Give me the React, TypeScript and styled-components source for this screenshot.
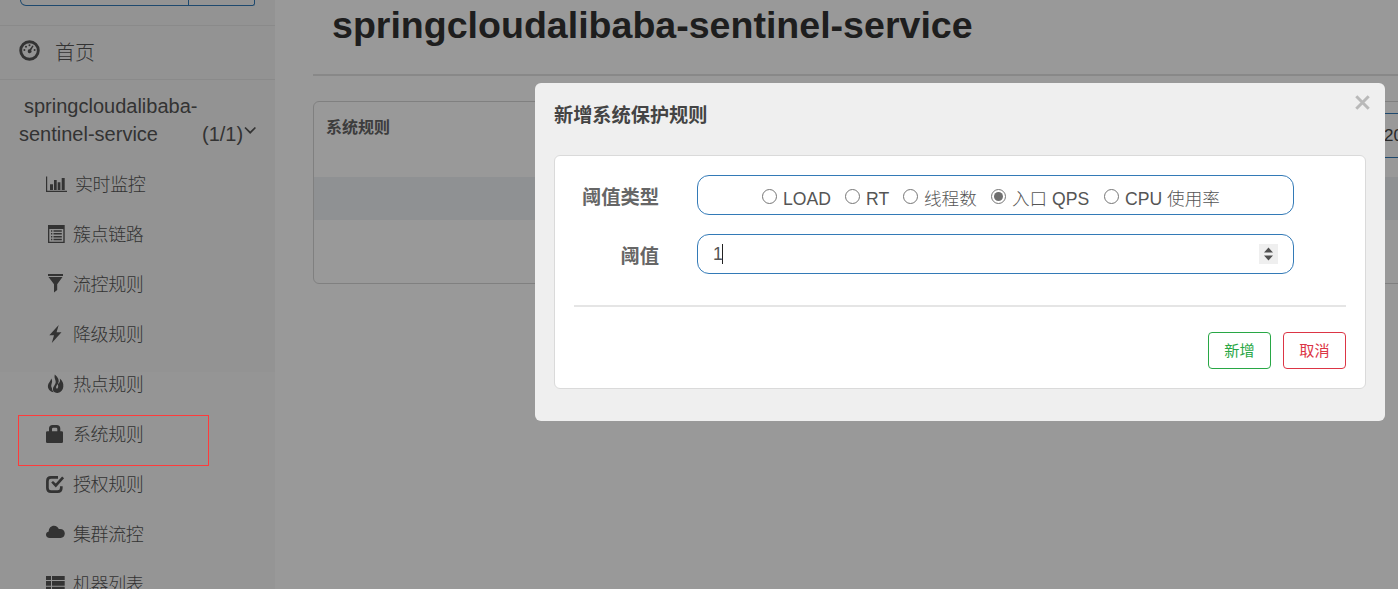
import React from "react";
import styled, { createGlobalStyle } from "styled-components";

const sans = `"Liberation Sans", "Noto Sans CJK SC", sans-serif`;

const Global = createGlobalStyle`
  * { box-sizing: border-box; }
  html, body { margin: 0; overflow: hidden; background: #fff; }
`;

const Page = styled.div`
  position: relative;
  display: flex;
  width: 1398px;
  height: 589px;
  overflow: hidden;
  font-family: ${sans};
  color: #555;
`;

const Sidebar = styled.aside`
  flex: none;
  width: 275px;
  height: 589px;
  overflow: hidden;
  background: linear-gradient(#f6f6f6 0 372px, #f9f9f9 372px);
`;

const SearchBar = styled.div`
  height: 26px;
  padding-left: 20px;
  border-bottom: 1px solid #e7e7e7;
`;

const SearchField = styled.div`
  display: flex;
  width: 235px;
  height: 6px;
  border: 1px solid #337ab7;
  border-top: 0;
  border-radius: 0 0 4px 10px;
`;

const SearchInput = styled.div`
  width: 168px;
  border-right: 1px solid #337ab7;
`;

const HomeLink = styled.div`
  display: flex;
  align-items: center;
  height: 54px;
  padding: 0 0 5px 19px;
  border-bottom: 1px solid #e7e7e7;
  font-size: 20px;
  font-weight: 300;

  span { margin: 3px 0 0 15px; }
`;

const AppLink = styled.div`
  height: 79px;
  padding: 12px 0 0 19px;
  font-size: 20px;
  line-height: 28px;
`;

const AppName = styled.div`
  padding-left: 5px;
`;

const AppStatus = styled.div`
  display: flex;

  span:first-child { width: 183px; }
  svg { margin: 6px 0 0 1px; }
`;

const MenuItem = styled.div<{ $shift?: number }>`
  display: flex;
  align-items: center;
  height: 50px;
  padding-left: 46px;
  font-size: 18px;
  font-weight: 300;
  line-height: 26px;

  svg { flex: none; display: block; }
  span {
    margin: 2px 0 0 ${(p) => 7 + (p.$shift ?? 0)}px;
    letter-spacing: -0.4px;
  }
`;

const Main = styled.main`
  flex: none;
  width: 1150px;
  padding-left: 38px;
`;

const Title = styled.h1`
  height: 76px;
  margin: 0;
  padding: 2px 0 0 19px;
  border-bottom: 2px solid #e3e3e3;
  color: #333;
  font-size: 37.55px;
  font-weight: 700;
  line-height: 47px;
`;

const RulesCard = styled.section`
  height: 183px;
  margin-top: 25px;
  border: 1px solid #d6d6d6;
  border-radius: 6px;
`;

const RulesHeader = styled.div`
  display: flex;
  justify-content: space-between;
  height: 75px;
  padding: 11px 20px 0 12px;
  font-size: 16px;
  font-weight: 700;
  line-height: 30px;
  color: #666;
`;

const MachineSelect = styled.div`
  width: 150px;
  height: 45px;
  padding-left: 129px;
  border: 1px solid #337ab7;
  border-radius: 6px;
  color: #444;
  font-size: 17px;
  font-weight: 400;
  line-height: 43px;
  white-space: nowrap;
`;

const TableHead = styled.div`
  height: 43px;
  background: #eff2f5;
`;

const Shade = styled.div`
  position: absolute;
  inset: 0;
  background: rgba(0, 0, 0, 0.4);
`;

const Highlight = styled.div`
  position: absolute;
  left: 18px;
  top: 415px;
  width: 191px;
  height: 51px;
  border: 1px solid #ff3b3b;
`;

const Dialog = styled.section`
  position: absolute;
  left: 535px;
  top: 83px;
  width: 850px;
  height: 338px;
  padding: 0 19px;
  border-radius: 6px;
  background: #efefef;
`;

const DialogHeader = styled.header`
  display: flex;
  justify-content: space-between;
  height: 72px;
  color: #444;
  font-size: 19.2px;
  font-weight: 700;
  line-height: 28px;

  span { margin-top: 19px; }
  svg { margin: 12px -4px 0 0; }
`;

const FormCard = styled.div`
  height: 234px;
  padding: 19px;
  border: 1px solid #dadada;
  border-radius: 6px;
  background: #fff;
`;

const FormRow = styled.div`
  display: flex;
  height: 40px;
  margin-bottom: 19px;
`;

const Label = styled.label`
  width: 85px;
  margin-right: 38px;
  color: #666;
  font-size: 19.3px;
  font-weight: 700;
  line-height: 46px;
  text-align: right;
`;

const Field = styled.div`
  display: flex;
  align-items: center;
  width: 597px;
  height: 40px;
  border: 1px solid #337ab7;
  border-radius: 12px;
  color: #555;
  font-size: 17.6px;
`;

const RadioField = styled(Field)`
  padding-left: 64px;
`;

const Option = styled.div<{ $width: number }>`
  display: flex;
  align-items: center;
  width: ${(p) => p.$width}px;
  font-weight: 300;
  white-space: nowrap;

  span { margin: 8px 0 0 6px; line-height: 26px; }
`;

const Radio = styled.i<{ $on?: boolean }>`
  flex: none;
  display: flex;
  width: 15px;
  height: 15px;
  margin-top: 2px;
  padding: 2px;
  border: 1px solid #767676;
  border-radius: 50%;

  &::after {
    content: "";
    flex: 1;
    border-radius: 50%;
    background: ${(p) => (p.$on ? "#707070" : "transparent")};
  }
`;

const NumberField = styled(Field)`
  justify-content: space-between;
  padding: 0 15px;
`;

const Typed = styled.span`
  height: 20px;
  border-right: 1px solid #222;
  line-height: 20px;
  letter-spacing: -0.6px;
`;

const Spinner = styled.div`
  display: grid;
  place-items: center;
  width: 19px;
  height: 20px;
  background: #efefef;

  svg { display: block; }
`;

const Actions = styled.div`
  display: flex;
  justify-content: flex-end;
  gap: 12px;
  margin-top: 31px;
  padding-top: 25px;
  border-top: 2px solid #e5e5e5;
`;

const Button = styled.button<{ $color: string }>`
  width: 63px;
  height: 37px;
  padding: 0 0 3px;
  border: 1px solid ${(p) => p.$color};
  border-radius: 4px;
  background: #fff;
  color: ${(p) => p.$color};
  font-family: ${sans};
  font-size: 15.2px;
`;

const Glyph = ({ children, w = 20 }: { children: React.ReactNode; w?: number }) => (
  <svg width={w} height="20" viewBox={`0 0 ${w} 20`} fill="currentColor">
    {children}
  </svg>
);

const menu: { text: string; shift?: number; icon: React.ReactNode }[] = [
  {
    text: "实时监控",
    shift: 1,
    icon: (
      <Glyph w={21}>
        <path d="M0 2.5h1.2v14.300H21V18H0zM4 10.300h3v5.700H4zM8 6h2.700v10H8zM11.700 8.200h2.700v7.800h-2.700zM15.700 4h3v12h-3z" />
      </Glyph>
    ),
  },
  {
    text: "簇点链路",
    icon: (
      <Glyph>
        <path fillRule="evenodd" d="M2 1h16.700v18H2zM3.300 5v12.700h14V5z" />
        <path d="M5 6.300h1.300v1.500H5zM7.500 6.300h8.300v1.500H7.500zM5 9.100h1.300v1.500H5zM7.500 9.100h8.300v1.500H7.500zM5 11.900h1.300v1.500H5zM7.500 11.900h8.300v1.500H7.500zM5 14.700h1.300v1.500H5zM7.500 14.700h8.300v1.500H7.500z" />
      </Glyph>
    ),
  },
  {
    text: "流控规则",
    icon: (
      <Glyph>
        <path d="M2 0h15v1.900H2zM2.500 3h14l-5.300 7.300v5.700l-3.200 2.500v-8.200z" />
      </Glyph>
    ),
  },
  {
    text: "降级规则",
    icon: (
      <Glyph>
        <path d="M12.700 1 3.300 11.300h4.700L5.800 19 15.500 8.200h-4.900z" />
      </Glyph>
    ),
  },
  {
    text: "热点规则",
    icon: (
      <Glyph>
        <path d="M8.800.500c3.600 3 4.800 5.900 3.300 9-.8 1.600-2.200 2.600-2 4.200.100 1.100 1.300 1.200 1.700.3.600-1.200.4-2.300 0-3.700 2-1.600 2.600-3.300 2-5.800 2.700 2.300 3.900 4.900 3.500 8.200-.3 3.300-2.200 5.500-5.800 6.200-3.100.200-4.800-1.500-4.600-3.900.2-2.500 2-3.700 2.700-6C10.400 6.500 7.700 4.500 8.800.500z" />
        <path d="M5.300 4.500c1.200 2 .9 3.700.3 5.300-.5 1.500-.6 3.200.3 4.200.1 1.700.7 3.100 1.800 4.200C3.900 17.600 1.700 15 1.900 11.700 2.100 8.900 4.600 7.500 5.300 4.500z" />
      </Glyph>
    ),
  },
  {
    text: "系统规则",
    icon: (
      <Glyph>
        <path fillRule="evenodd" d="M3 7.300V4.500C3 2.200 4.300 1 6.500 1h4.300c2.200 0 3.500 1.200 3.500 3.500v2.800h1.400q1.300 0 1.300 1.300v9.100q0 1.300-1.300 1.300H1.300Q0 19 0 17.700V8.600q0-1.300 1.300-1.300zm3 0h5.300V5q0-1.300-1.300-1.300H7.300Q6 3.700 6 5z" />
      </Glyph>
    ),
  },
  {
    text: "授权规则",
    icon: (
      <Glyph>
        <path fill="none" stroke="currentColor" strokeWidth="2.700" d="M12 3.300H5Q1.400 3.300 1.400 7v7Q1.400 17.600 5 17.600h6.600q3.700 0 3.700-3.600v-1.800" />
        <path d="m5.200 8.600 1.800-1.700 2.800 2.700 6.300-7 2 1.700-8.300 9.300z" />
      </Glyph>
    ),
  },
  {
    text: "集群流控",
    icon: (
      <Glyph>
        <path d="M3.800 14C1.400 14 0 12.600 0 10.700c0-1.800 1.200-3 2.700-3.300C2.800 4.100 5 1.800 8 1.800c2.400 0 4 1.300 4.800 3.300 3.600-.7 6 1.500 6 4.500 0 2.700-1.800 4.400-4.100 4.400z" />
      </Glyph>
    ),
  },
  {
    text: "机器列表",
    icon: (
      <Glyph>
        <path d="M0 2h5v4H0zM6 2h12.700v4H6zM0 7h5v4.700H0zM6 7h12.700v4.700H6zM0 12.700h5v4.600H0zM6 12.700h12.700v4.600H6z" />
      </Glyph>
    ),
  },
];

const options = [
  { text: "LOAD", width: 83 },
  { text: "RT", width: 58 },
  { text: "线程数", width: 88 },
  { text: "入口 QPS", width: 113, on: true },
  { text: "CPU 使用率", width: 120 },
];

export default function App() {
  return (
    <Page>
      <Global />
      <Sidebar>
        <SearchBar>
          <SearchField>
            <SearchInput />
          </SearchField>
        </SearchBar>
        <HomeLink>
          <svg width="21" height="21" viewBox="0 0 21 21" fill="currentColor">
            <circle cx="10.500" cy="10.500" r="8.800" fill="none" stroke="currentColor" strokeWidth="2.900" />
            <circle cx="5.400" cy="10" r="1" />
            <circle cx="15.600" cy="10" r="1" />
            <circle cx="7" cy="6.700" r="1" />
            <circle cx="10.500" cy="5.300" r="1" />
            <path d="m13.400 5.500 1.200.6-2.400 4.100a1.900 1.900 0 1 1-1.500-.9z" />
          </svg>
          <span>首页</span>
        </HomeLink>
        <AppLink>
          <AppName>springcloudalibaba-</AppName>
          <AppStatus>
            <span>sentinel-service</span>
            <span>(1/1)</span>
            <svg width="13" height="10" viewBox="0 0 13 10" fill="none" stroke="currentColor" strokeWidth="1.700">
              <path d="m1 1.500 5.200 5.200 5.200-5.200" />
            </svg>
          </AppStatus>
        </AppLink>
        {menu.map((m) => (
          <MenuItem key={m.text} $shift={m.shift}>
            {m.icon}
            <span>{m.text}</span>
          </MenuItem>
        ))}
      </Sidebar>
      <Main>
        <Title>springcloudalibaba-sentinel-service</Title>
        <RulesCard>
          <RulesHeader>
            <span>系统规则</span>
            <MachineSelect>20</MachineSelect>
          </RulesHeader>
          <TableHead />
        </RulesCard>
      </Main>
      <Shade />
      <Highlight />
      <Dialog>
        <DialogHeader>
          <span>新增系统保护规则</span>
          <svg width="15" height="15" viewBox="0 0 15 15" stroke="#b9b9b9" strokeWidth="3">
            <path d="m1.300 1.300 12.400 12.400M13.700 1.300 1.300 13.700" />
          </svg>
        </DialogHeader>
        <FormCard>
          <FormRow>
            <Label>阈值类型</Label>
            <RadioField>
              {options.map((o) => (
                <Option key={o.text} $width={o.width}>
                  <Radio $on={o.on} />
                  <span>{o.text}</span>
                </Option>
              ))}
            </RadioField>
          </FormRow>
          <FormRow>
            <Label>阈值</Label>
            <NumberField>
              <Typed>1</Typed>
              <Spinner>
                <svg width="9" height="14" viewBox="0 0 9 14" fill="#505050">
                  <path d="M4.500.500 9 5.500H0zM0 8.500h9l-4.500 5z" />
                </svg>
              </Spinner>
            </NumberField>
          </FormRow>
          <Actions>
            <Button $color="#28a745">新增</Button>
            <Button $color="#dc3545">取消</Button>
          </Actions>
        </FormCard>
      </Dialog>
    </Page>
  );
}
